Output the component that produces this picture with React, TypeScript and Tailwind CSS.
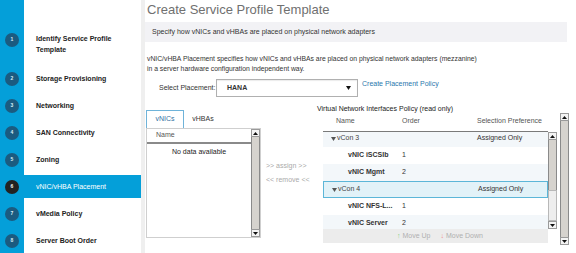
import React from 'react';

const steps = [
  { n: 1, lines: ['Identify Service Profile', 'Template'] },
  { n: 2, lines: ['Storage Provisioning'] },
  { n: 3, lines: ['Networking'] },
  { n: 4, lines: ['SAN Connectivity'] },
  { n: 5, lines: ['Zoning'] },
  { n: 6, lines: ['vNIC/vHBA Placement'], active: true },
  { n: 7, lines: ['vMedia Policy'] },
  { n: 8, lines: ['Server Boot Order'] },
];

const rows = [
  { group: true, name: 'vCon 3', order: '', pref: 'Assigned Only', bg: 'bg-[#f3f7fa]' },
  { group: false, name: 'vNIC iSCSIb', order: '1', pref: '', bg: 'bg-white' },
  { group: false, name: 'vNIC Mgmt', order: '2', pref: '', bg: 'bg-[#f3f7fa]' },
  { group: true, name: 'vCon 4', order: '', pref: 'Assigned Only', bg: 'bg-[#e2f2f8] border border-[#5cb6d8]' },
  { group: false, name: 'vNIC NFS-L...', order: '1', pref: '', bg: 'bg-white' },
  { group: false, name: 'vNIC Server', order: '2', pref: '', bg: 'bg-[#f3f7fa]' },
];

function Tri({ up }: { up?: boolean }) {
  return (
    <svg width="5" height="3" viewBox="0 0 5 3">
      <polygon points={up ? '0,3 5,3 2.5,0' : '0,0 5,0 2.5,3'} fill="#111" />
    </svg>
  );
}

function ScrollBtn({ up }: { up?: boolean }) {
  return (
    <div className="h-[8px] shrink-0 flex items-center justify-center bg-[#f4f4f4] border border-[#9a9a9a]">
      <Tri up={up} />
    </div>
  );
}

// classic grey scrollbar, thumb fills the track unless a split is given
function ScrollBar({ className, split }: { className: string; split?: boolean }) {
  return (
    <div className={`flex flex-col w-[9px] bg-[#e4e2de] ${className}`}>
      <ScrollBtn up />
      {split ? (
        <>
          <div className="h-[50px] bg-[#d6d3ce] border-x border-[#8a8a8a]" />
          <div className="flex-1 border border-[#b8b8b8] bg-[#eeeeee]" />
        </>
      ) : (
        <div className="flex-1 bg-[#d6d3ce] border-x border-[#8a8a8a]" />
      )}
      <ScrollBtn />
    </div>
  );
}

function Sidebar() {
  return (
    <aside className="w-[141px] h-full shrink-0 flex flex-col gap-[4px] pt-[33px] bg-[linear-gradient(to_right,#049fd9_24px,#ffffff_24px)]">
      {steps.map((s) => (
        <div
          key={s.n}
          className={`flex ${s.n === 1 ? 'items-start h-[30px]' : 'items-center h-[23px]'} ${
            s.active ? 'bg-[#049fd9] text-white' : 'text-[#222]'
          }`}
        >
          <div className="w-[24px] flex justify-center">
            <div
              className={`w-[14px] h-[14px] rounded-full flex items-center justify-center text-[5px] font-bold ${
                s.active ? 'bg-[#222] text-white' : 'bg-[#1b5b80] text-[#d8eef8]'
              }`}
            >
              {s.n}
            </div>
          </div>
          <div className={`pl-[12px] text-[7px] leading-[11px] ${s.active ? 'font-normal' : 'font-bold'}`}>
            {s.lines.map((l) => (
              <div key={l}>{l}</div>
            ))}
          </div>
        </div>
      ))}
    </aside>
  );
}

export default function App() {
  return (
    <div className="w-[576px] h-[253px] flex overflow-hidden bg-white text-[#333] font-['Liberation_Sans',Arial,sans-serif]">
      <Sidebar />
      <div className="w-[4px] shrink-0 bg-[#efefef]" />

      <main className="flex-1 flex flex-col min-w-0">
        <h1 className="pl-[2px] h-[22px] text-[13px] leading-[19px] text-[#707070]">Create Service Profile Template</h1>
        <div className="w-[422px] h-[20px] bg-[#f2f2f5] flex items-center pl-[7px] text-[7px] text-[#333]">
          Specify how vNICs and vHBAs are placed on physical network adapters
        </div>

        <div className="mt-[12px] pl-[2px] text-[6.8px] leading-[10px]">
          <div>vNIC/vHBA Placement specifies how vNICs and vHBAs are placed on physical network adapters (mezzanine)</div>
          <div>in a server hardware configuration independent way.</div>
        </div>

        <div className="mt-[5px] h-[18px] flex items-start pl-[14px] text-[7px]">
          <div className="w-[57px] leading-[18px]">Select Placement:</div>
          <div className="w-[142px] h-[18px] border border-[#b0b0b0] flex items-center justify-between pl-[10px] pr-[6px] shadow-[inset_0_1px_1px_rgba(0,0,0,0.08)]">
            <span className="font-bold text-[#333]">HANA</span>
            <svg width="5" height="4" viewBox="0 0 5 4">
              <polygon points="0,0 5,0 2.5,4" fill="#111" />
            </svg>
          </div>
          <div className="ml-[4px] leading-[10px] text-[#2a78ad]">Create Placement Policy</div>
        </div>

        <div className="mt-[6px] flex items-start">
          {/* left: available vNICs */}
          <div className="ml-[1px] mt-[7px] w-[115px] flex flex-col text-[7px]">
            <div className="h-[18px] flex items-end">
              <div className="w-[38px] h-[18px] border border-b-0 border-[#6fb3d9] bg-white flex items-center justify-center text-[#2f6f9f]">
                vNICs
              </div>
              <div className="w-[38px] h-[18px] flex items-center justify-center text-[#333]">vHBAs</div>
            </div>
            <div className="h-[110px] flex border border-[#cfcfcf]">
              <div className="flex-1 flex flex-col">
                <div className="h-[15px] flex items-center pl-[9px] border-b-2 border-[#8a8a8a] text-[#555]">Name</div>
                <div className="mt-[3px] leading-[10px] text-center text-[#222]">No data available</div>
              </div>
              <ScrollBar className="h-full" />
            </div>
          </div>

          {/* middle: assign / remove */}
          <div className="w-[56px] pl-[5px] pt-[58px] flex flex-col gap-[4px] text-[7px] leading-[10px] text-[#aaaaaa]">
            <div>&gt;&gt; assign &gt;&gt;</div>
            <div>&lt;&lt; remove &lt;&lt;</div>
          </div>

          {/* right: policy table */}
          <div className="w-[252px] flex items-start text-[7px]">
            <div className="w-[240px] mt-[1px] flex flex-col">
              <div className="leading-[10px] text-[#222]">Virtual Network Interfaces Policy (read only)</div>
              <div className="ml-[6px] w-[234px] flex flex-col">
                <div className="h-[18px] w-[225px] flex items-center pb-[2px] border-b border-[#7a7a7a] text-[#555]">
                  <div className="w-[79px] pl-[13px]">Name</div>
                  <div className="w-[75px]">Order</div>
                  <div>Selection Preference</div>
                </div>
                <div className="flex">
                  <div className="w-[225px] h-[97px] overflow-hidden">
                    <div className="-mt-[2px]">
                      {rows.map((r) => (
                        <div key={r.name} className={`h-[17px] flex items-center ${r.bg}`}>
                          <div className={`w-[79px] flex items-center ${r.group ? 'pl-[8px] gap-[1px] text-[#444]' : 'pl-[25px] font-bold text-[#333]'}`}>
                            {r.group && (
                              <svg width="5" height="4" viewBox="0 0 5 4">
                                <polygon points="0,0 5,0 2.5,4" fill="#555" />
                              </svg>
                            )}
                            <span>{r.name}</span>
                          </div>
                          <div className="w-[75px] text-[#333]">{r.order}</div>
                          <div className="text-[#333]">{r.pref}</div>
                        </div>
                      ))}
                    </div>
                  </div>
                  <ScrollBar className="h-[97px]" split />
                </div>
                <div className="w-[225px] h-[14px] bg-[#ececec] flex items-center pl-[74px] gap-[10px] text-[#b0b0b0]">
                  <span>
                    <span className="text-[#7fcf7f]">↑</span> Move Up
                  </span>
                  <span>
                    <span className="text-[#ef8a8a]">↓</span> Move Down
                  </span>
                </div>
              </div>
            </div>
            <ScrollBar className="ml-[3px] mt-[10px] h-[132px]" />
          </div>
        </div>
      </main>
    </div>
  );
}
